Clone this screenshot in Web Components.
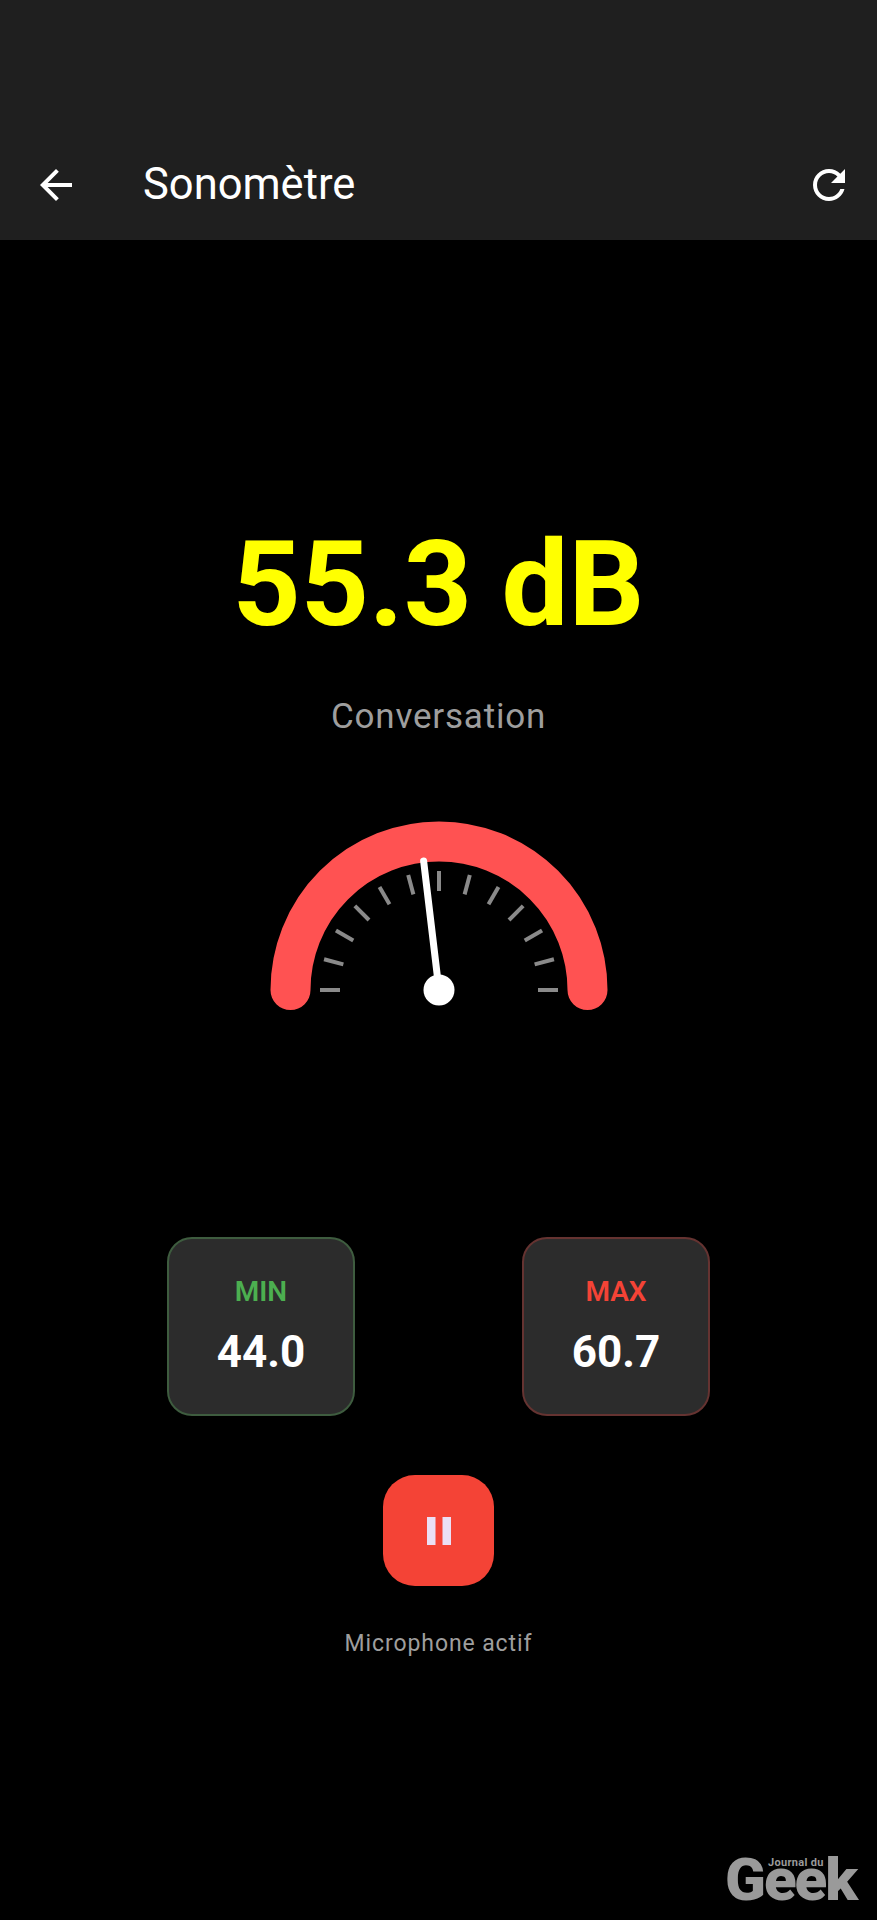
<!DOCTYPE html>
<html lang="fr">
<head>
<meta charset="utf-8">
<title>Sonomètre</title>
<style>
html,body{margin:0;padding:0;background:#000;}
body{width:877px;height:1920px;overflow:hidden;font-family:Roboto,"Liberation Sans",sans-serif;display:flex;flex-direction:column;position:relative;}
</style>
</head>
<body>
<app-bar title-text="Sonomètre"></app-bar>
<level-readout value="55.3 dB" label="Conversation"></level-readout>
<sound-gauge needle="-6.8"></sound-gauge>
<stat-row>
  <stat-card label="MIN" value="44.0" tone="#4caf50" edge="#3e5c3f"></stat-card>
  <stat-card label="MAX" value="60.7" tone="#f44336" edge="#653331"></stat-card>
</stat-row>
<pause-button caption="Microphone actif"></pause-button>
<geek-mark></geek-mark>
<script>
function define(name, css, html, init){
  customElements.define(name, class extends HTMLElement{
    connectedCallback(){
      if(this.shadowRoot) return;
      const root=this.attachShadow({mode:'open'});
      const attr=k=>this.getAttribute(k)||'';
      root.innerHTML='<style>'+css+'</style>'+(typeof html==='function'?html(attr):html);
      if(init) init(root,attr,this);
    }
  });
}
define('app-bar',
 `:host{display:flex;align-items:center;box-sizing:border-box;height:240px;padding:130px 24px 0 32px;background:#1f1f1f;color:#fff;flex:none}
  svg{width:48px;height:48px;fill:#fff;display:block;flex:none}
  h1{margin:0 0 0 63px;flex:1;font:400 43.5px/48px Roboto,sans-serif;letter-spacing:0}`,
 a=>`<svg viewBox="0 0 24 24" aria-label="Retour"><path d="M20 11H7.83l5.59-5.59L12 4l-8 8 8 8 1.41-1.41L7.83 13H20v-2z"/></svg>
     <h1>${a('title-text')}</h1>
     <svg viewBox="0 0 24 24" aria-label="Réinitialiser"><path d="M17.65 6.35C16.2 4.9 14.21 4 12 4c-4.42 0-7.99 3.58-7.99 8s3.57 8 7.99 8c3.73 0 6.84-2.55 7.73-6h-2.08c-.82 2.33-3.04 4-5.65 4-3.31 0-6-2.69-6-6s2.69-6 6-6c1.66 0 3.14.69 4.22 1.78L13 11h7V4l-2.35 2.35z"/></svg>`);
define('level-readout',
 `:host{display:flex;flex-direction:column;align-items:center;flex:none;padding-top:275px}
  .v{font:700 119px/140px Roboto,sans-serif;color:#ff0;white-space:nowrap}
  .l{margin-top:42px;font:400 35px/40px Roboto,sans-serif;letter-spacing:.8px;color:#9e9e9e}`,
 a=>`<div class="v">${a('value')}</div><div class="l">${a('label')}</div>`);
define('sound-gauge',
 `:host{display:flex;justify-content:center;flex:none;margin-top:63px}
  svg{display:block;width:400px;height:220px}`,
 `<svg viewBox="-200 -190 400 220"></svg>`,
 (root,attr)=>{
   const svg=root.querySelector('svg');
   let s='<path d="M-148.5 0A148.5 148.5 0 0 1 148.5 0" fill="none" stroke="#ff5252" stroke-width="40" stroke-linecap="round"/>';
   for(let i=0;i<=12;i++){
     const t=Math.PI*i/12,c=Math.cos(t),n=Math.sin(t);
     s+=`<line x1="${(-99*c).toFixed(2)}" y1="${(-99*n).toFixed(2)}" x2="${(-119*c).toFixed(2)}" y2="${(-119*n).toFixed(2)}" stroke="#8a8a8a" stroke-width="4"/>`;
   }
   const d=parseFloat(attr('needle'))*Math.PI/180;
   s+=`<line x1="0" y1="0" x2="${(130*Math.sin(d)).toFixed(2)}" y2="${(-130*Math.cos(d)).toFixed(2)}" stroke="#fff" stroke-width="7" stroke-linecap="round"/>`;
   s+='<circle r="15.5" fill="#fff"/>';
   svg.innerHTML=s;
 });
define('stat-row',
 `:host{display:flex;justify-content:center;gap:167px;flex:none;margin-top:217px}`,
 `<slot></slot>`);
define('stat-card',
 `:host{display:flex;flex-direction:column;align-items:center;box-sizing:border-box;width:188px;height:179px;padding-top:36px;border-radius:25px;background:#2c2c2c;border:2px solid var(--edge)}
  .l{font:600 28px/34px Roboto,sans-serif}
  .v{margin-top:17px;font:700 44px/52px Roboto,sans-serif;color:#fff}`,
 a=>`<div class="l" style="color:${a('tone')}">${a('label')}</div><div class="v">${a('value')}</div>`,
 (r,a,h)=>h.style.setProperty('--edge',a('edge')));
define('pause-button',
 `:host{display:flex;flex-direction:column;align-items:center;flex:none;margin-top:59px}
  .b{width:111px;height:111px;border-radius:32px;background:#f44336;display:flex;align-items:center;justify-content:center}
  svg{width:24px;height:28px;display:block;fill:#ebdff5}
  .c{margin-top:43px;font:400 23px/30px Roboto,sans-serif;letter-spacing:.9px;color:#9e9e9e}`,
 a=>`<div class="b"><svg viewBox="0 0 24 28"><rect width="8.5" height="28"/><rect x="15.5" width="8.5" height="28"/></svg></div><div class="c">${a('caption')}</div>`);
define('geek-mark',
 `:host{position:absolute;left:725px;top:1852px;width:135px;height:56px;color:#9a9a9a}
  .j{position:absolute;left:43px;top:4px;font:700 11px/13px Roboto,sans-serif;letter-spacing:.3px;white-space:nowrap}
  .g{position:absolute;left:0;top:-2px;font:900 60px/60px Roboto,sans-serif;letter-spacing:-2px;white-space:nowrap}`,
 `<div class="g">Geek</div><div class="j">Journal du</div>`);
</script>
</body>
</html>
